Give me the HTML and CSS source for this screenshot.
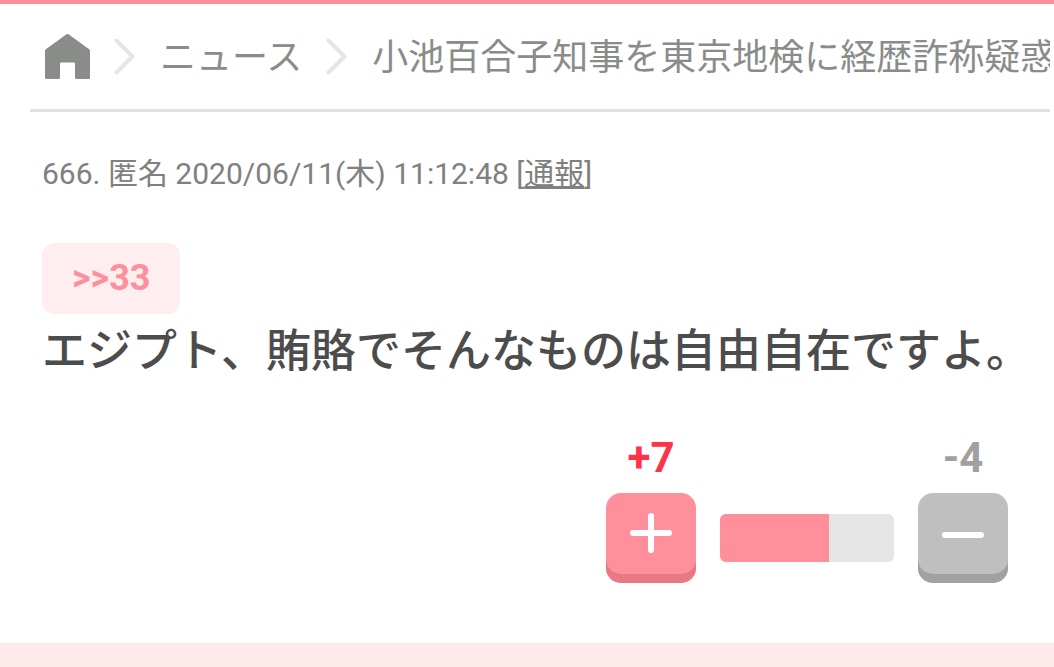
FILE: index.html
```
<!DOCTYPE html>
<html lang="ja">
<head>
    <meta charset="UTF-8">
    <meta name="viewport" content="width=device-width, initial-scale=1.0">
    <title>小池百合子知事を東京地検に経歴詐称疑惑</title>
    <link rel="stylesheet" href="styles.css">
</head>
<body>
    <nav class="breadcrumb">
        <a class="home" href="#" aria-label="ホーム">
            <svg width="46" height="46" viewBox="0 0 46 46">
                <path d="M22.500 .3Q23.500 -.2 24.500 .3L45.500 15.500Q46 16 46 17V43.500Q46 45 44.500 45H32.500Q31 45 31 43.500V29.500Q31 28.500 30 28.500H17Q16 28.500 16 29.500V43.500Q16 45 14.500 45H2.500Q1 45 1 43.500V17Q1 16 1.500 15.500Z" fill="#8a8c8a"/>
            </svg>
        </a>
        <svg class="arrow" width="21" height="37" viewBox="0 0 21 37">
            <path d="M2.500 2.500L18.500 18.500L2.500 34.500" fill="none" stroke="#e5e5e5" stroke-width="4" stroke-linecap="round" stroke-linejoin="round"/>
        </svg>
        <a href="#">ニュース</a>
        <svg class="arrow" width="21" height="37" viewBox="0 0 21 37">
            <path d="M2.500 2.500L18.500 18.500L2.500 34.500" fill="none" stroke="#e5e5e5" stroke-width="4" stroke-linecap="round" stroke-linejoin="round"/>
        </svg>
        <a class="current" href="#">小池百合子知事を東京地検に経歴詐称疑惑</a>
    </nav>
    <div class="comment">
        <p class="info">666. 匿名 2020/06/11(木) 11:12:48 [<a href="#">通報</a>]</p>
        <a class="anchor" href="#">&gt;&gt;33</a>
        <p class="text">エジプト、賄賂でそんなものは自由自在ですよ。</p>
        <div class="rate">
            <div class="vote">
                <span class="num plus">+7</span>
                <button class="btn btn-plus" type="button" aria-label="プラス">
                    <svg width="90" height="80" viewBox="0 0 90 80">
                        <path d="M27 40H63M45 23V57" fill="none" stroke="#fff" stroke-width="6" stroke-linecap="round"/>
                    </svg>
                </button>
            </div>
            <div class="graph"><div class="graph-plus" style="width: 62.5%"></div></div>
            <div class="vote">
                <span class="num minus">-4</span>
                <button class="btn btn-minus" type="button" aria-label="マイナス">
                    <svg width="90" height="80" viewBox="0 0 90 80">
                        <path d="M27 42H63" fill="none" stroke="#fff" stroke-width="6" stroke-linecap="round"/>
                    </svg>
                </button>
            </div>
        </div>
    </div>
    <div class="footer"></div>
</body>
</html>
```
FILE: styles.css
```
*{
    margin: 0;
    padding: 0;
    box-sizing: border-box;
}
body{
    border-top: 4px solid #ff8f9b;
    background-color: #fff;
    font-family: Roboto, "Noto Sans CJK JP", sans-serif;
    color: #4c4c4c;
}
.breadcrumb{
    display: flex;
    align-items: center;
    height: 108px;
    margin: 0 4px 0 30px;
    padding-left: 14px;
    border-bottom: 3px solid #e2e2e2;
    font-size: 36px;
    line-height: 52px;
    white-space: nowrap;
    overflow: hidden;
}
.breadcrumb a{
    flex-shrink: 0;
    padding-top: 2px;
    color: #8a8c8a;
    text-decoration: none;
}
.breadcrumb .home{
    height: 46px;
    padding-top: 0;
}
.breadcrumb svg{
    display: block;
}
.breadcrumb .arrow{
    flex-shrink: 0;
    margin: 0 25px 0 24px;
}
.comment{
    padding: 40px 46px 60px 42px;
}
.info{
    margin-bottom: 47px;
    font-size: 30px;
    line-height: 44px;
    color: #808080;
}
.info a{
    color: #808080;
}
.anchor{
    display: block;
    width: fit-content;
    padding: 0 30px;
    border-radius: 12px;
    background-color: #ffeef0;
    font-size: 36px;
    font-weight: bold;
    line-height: 71px;
    color: #ff8f9b;
    text-decoration: none;
}
.text{
    margin-right: -40px;
    padding-top: 2px;
    font-size: 45px;
    font-weight: 500;
    line-height: 72px;
}
.rate{
    display: flex;
    justify-content: flex-end;
    align-items: flex-end;
    gap: 24px;
    margin-top: 40px;
}
.vote{
    width: 90px;
    text-align: center;
}
.num{
    display: block;
    margin-bottom: 5px;
    font-size: 42px;
    font-weight: bold;
    line-height: 60px;
}
.plus{
    color: #ff3347;
}
.minus{
    color: #a0a0a0;
}
.btn{
    display: block;
    width: 90px;
    height: 90px;
    border: none;
    border-radius: 15px;
    cursor: pointer;
}
.btn svg{
    display: block;
    height: 90px;
    padding-bottom: 10px;
}
.btn-plus{
    background-color: #ff8f9b;
    box-shadow: inset 0 -9px 0 #ea7884;
}
.btn-minus{
    background-color: #bfbfbf;
    box-shadow: inset 0 -9px 0 #a1a1a1;
}
.graph{
    width: 174px;
    height: 48px;
    margin-bottom: 21px;
    border-radius: 6px;
    background-color: #e5e5e5;
    overflow: hidden;
}
.graph-plus{
    height: 100%;
    background-color: #ff8f9b;
}
.footer{
    height: 24px;
    background-color: #ffeaeb;
}
```
